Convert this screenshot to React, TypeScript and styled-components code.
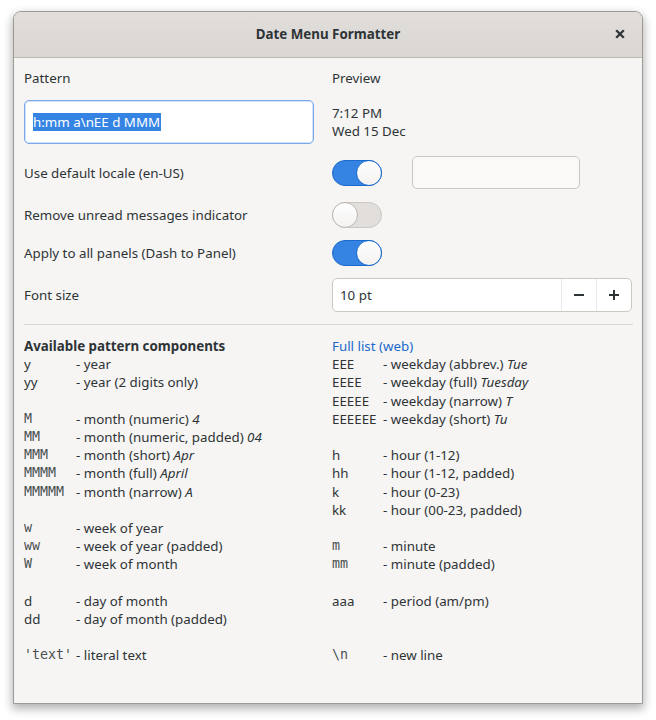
import React from "react";
import styled, { createGlobalStyle } from "styled-components";

const Global = createGlobalStyle`
  html, body { margin: 0; padding: 0; background: #ffffff; }
  body { font-family: "Noto Sans", "DejaVu Sans", sans-serif; font-size: 13.33px; color: #2e3436; }
  * { box-sizing: border-box; }
`;

const Page = styled.div`
  padding: 11px 0 16px 13px;
`;

const Window = styled.div`
  width: 630px;
  height: 693px;
  border: 1px solid #9c9a97;
  border-radius: 8px 8px 0 0;
  background: #f6f5f4;
  box-shadow: 0 4px 10px 1px rgba(0, 0, 0, 0.3);
  overflow: hidden;
  display: flex;
  flex-direction: column;
`;

const HeaderBar = styled.div`
  height: 46px;
  flex: none;
  background: linear-gradient(#e1dedb, #dad6d2);
  border-bottom: 1px solid #c0bab4;
  display: grid;
  grid-template-columns: 60px 1fr 60px;
  align-items: center;
`;

const Title = styled.div`
  grid-column: 2;
  text-align: center;
  font-weight: bold;
  font-size: 13.33px;
  line-height: 18px;
  margin-top: -2px;
  color: #2e3436;
`;

const CloseButton = styled.div`
  grid-column: 3;
  display: flex;
  align-items: center;
  justify-content: flex-end;
  padding-right: 17px;
  margin-top: -2px;
  height: 100%;
`;

const Content = styled.div`
  padding: 9px 9px 0 10px;
  display: flex;
  flex-direction: column;
`;

const Form = styled.div`
  display: grid;
  grid-template-columns: 290px 300px;
  column-gap: 18px;
  row-gap: 12px;
  grid-template-rows: 21px 44px 34px 26px 26px 34px;
`;

const Cell = styled.div`
  display: flex;
  align-items: center;
  gap: 30px;
`;

const Label = styled.span`
  color: #2e3436;
`;

const Entry = styled.div<{ $focused?: boolean }>`
  width: 100%;
  height: 100%;
  background: #ffffff;
  border: 1px solid ${(p) => (p.$focused ? "#79a8e8" : "#cdc7c2")};
  box-shadow: ${(p) => (p.$focused ? "inset 0 0 0 1px rgba(53,132,228,0.22)" : "none")};
  border-radius: 5px;
  display: flex;
  align-items: center;
  padding-left: 8px;
`;

const Selected = styled.span`
  background: #3584e4;
  color: #ffffff;
  line-height: 18px;
  padding-right: 1px;
`;

const Preview = styled.div`
  line-height: 18px;
  display: flex;
  flex-direction: column;
  justify-content: center;
`;

const Track = styled.div<{ $on?: boolean }>`
  width: 50px;
  height: 26px;
  flex: none;
  border-radius: 13px;
  border: 1px solid ${(p) => (p.$on ? "#1b6acb" : "#cdc7c2")};
  background: ${(p) => (p.$on ? "#3584e4" : "#e1dedb")};
  display: flex;
  align-items: center;
  justify-content: ${(p) => (p.$on ? "flex-end" : "flex-start")};
`;

const Knob = styled.div<{ $on?: boolean }>`
  width: 26px;
  height: 26px;
  margin: -1px;
  border-radius: 50%;
  background: linear-gradient(#ffffff, #f3f2f1);
  border: 1px solid ${(p) => (p.$on ? "#1b6acb" : "#bfb8b1")};
`;

const LocaleEntry = styled.div`
  width: 168px;
  height: 33px;
  margin-top: -1px;
  background: #faf9f8;
  border: 1px solid #cdc7c2;
  border-radius: 5px;
`;

const Spin = styled.div`
  width: 100%;
  height: 100%;
  background: #ffffff;
  border: 1px solid #cdc7c2;
  border-radius: 5px;
  display: flex;
  align-items: stretch;
`;

const SpinText = styled.div`
  flex: 1;
  display: flex;
  align-items: center;
  padding-left: 7px;
`;

const SpinButton = styled.div`
  width: 35px;
  border-left: 1px solid #ebe9e7;
  display: flex;
  align-items: center;
  justify-content: center;
`;

const Separator = styled.div`
  height: 1px;
  background: #d9d5d1;
  margin: 12px 0 12px;
`;

const Legend = styled.div`
  display: grid;
  grid-template-columns: 290px 300px;
  column-gap: 18px;
  line-height: 18.2px;
`;

const Column = styled.div`
  display: flex;
  flex-direction: column;
`;

const Heading = styled.div`
  font-weight: bold;
  height: 18.2px;
`;

const Link = styled.span`
  color: #1b6acb;
  height: 18.2px;
`;

const Line = styled.div`
  display: flex;
  height: 18.2px;
  white-space: nowrap;
`;

const Code = styled.span<{ $mono?: boolean; $w: number }>`
  min-width: ${(p) => p.$w}px;
  font-family: ${(p) =>
    p.$mono ? '"DejaVu Sans Mono", "Liberation Mono", monospace' : '"Noto Sans", sans-serif'};
  font-size: 13.33px;
  color: ${(p) => (p.$mono ? "#4a5052" : "#2e3436")};
`;

const Ex = styled.i``;

type Item = { c?: string; mono?: boolean; d?: string; ex?: string };

const left: Item[] = [
  { c: "y", d: "- year" },
  { c: "yy", d: "- year (2 digits only)" },
  {},
  { c: "M", mono: true, d: "- month (numeric)", ex: "4" },
  { c: "MM", mono: true, d: "- month (numeric, padded)", ex: "04" },
  { c: "MMM", mono: true, d: "- month (short)", ex: "Apr" },
  { c: "MMMM", mono: true, d: "- month (full)", ex: "April" },
  { c: "MMMMM", mono: true, d: "- month (narrow)", ex: "A" },
  {},
  { c: "w", mono: true, d: "- week of year" },
  { c: "ww", mono: true, d: "- week of year (padded)" },
  { c: "W", mono: true, d: "- week of month" },
  {},
  { c: "d", d: "- day of month" },
  { c: "dd", d: "- day of month (padded)" },
  {},
  { c: "'text'", mono: true, d: "- literal text" },
];

const right: Item[] = [
  { c: "EEE", d: "- weekday (abbrev.)", ex: "Tue" },
  { c: "EEEE", d: "- weekday (full)", ex: "Tuesday" },
  { c: "EEEEE", d: "- weekday (narrow)", ex: "T" },
  { c: "EEEEEE", d: "- weekday (short)", ex: "Tu" },
  {},
  { c: "h", d: "- hour (1-12)" },
  { c: "hh", d: "- hour (1-12, padded)" },
  { c: "k", d: "- hour (0-23)" },
  { c: "kk", d: "- hour (00-23, padded)" },
  {},
  { c: "m", mono: true, d: "- minute" },
  { c: "mm", mono: true, d: "- minute (padded)" },
  {},
  { c: "aaa", d: "- period (am/pm)" },
  {},
  {},
  { c: "\\n", mono: true, d: "- new line" },
];

const Lines = ({ items, w }: { items: Item[]; w: number }) => (
  <>
    {items.map((it, i) => (
      <Line key={i}>
        {it.c && (
          <>
            <Code $mono={it.mono} $w={w}>
              {it.c}
            </Code>
            <span>
              {it.d}
              {it.ex && (
                <>
                  {" "}
                  <Ex>{it.ex}</Ex>
                </>
              )}
            </span>
          </>
        )}
      </Line>
    ))}
  </>
);

const Switch = ({ on }: { on?: boolean }) => (
  <Track $on={on}>
    <Knob $on={on} />
  </Track>
);

export default function App() {
  return (
    <Page>
      <Global />
      <Window>
        <HeaderBar>
          <Title>Date Menu Formatter</Title>
          <CloseButton>
            <svg width="10" height="10" viewBox="0 0 10 10">
              <path d="M1.2 1.2 L8.8 8.8 M8.8 1.2 L1.2 8.8" stroke="#2e3436" strokeWidth="2.3" strokeLinecap="butt" />
            </svg>
          </CloseButton>
        </HeaderBar>
        <Content>
          <Form>
            <Cell>
              <Label>Pattern</Label>
            </Cell>
            <Cell>
              <Label>Preview</Label>
            </Cell>

            <Cell>
              <Entry $focused>
                <Selected>h:mm a\nEE d MMM</Selected>
              </Entry>
            </Cell>
            <Preview>
              <span>7:12 PM</span>
              <span>Wed 15 Dec</span>
            </Preview>

            <Cell>
              <Label>Use default locale (en-US)</Label>
            </Cell>
            <Cell>
              <Switch on />
              <LocaleEntry />
            </Cell>

            <Cell>
              <Label>Remove unread messages indicator</Label>
            </Cell>
            <Cell>
              <Switch />
            </Cell>

            <Cell>
              <Label>Apply to all panels (Dash to Panel)</Label>
            </Cell>
            <Cell>
              <Switch on />
            </Cell>

            <Cell>
              <Label>Font size</Label>
            </Cell>
            <Cell>
              <Spin>
                <SpinText>10 pt</SpinText>
                <SpinButton>
                  <svg width="14" height="14" viewBox="0 0 14 14">
                    <path d="M2 7 H12" stroke="#2e3436" strokeWidth="2" />
                  </svg>
                </SpinButton>
                <SpinButton>
                  <svg width="14" height="14" viewBox="0 0 14 14">
                    <path d="M2 7 H12 M7 2 V12" stroke="#2e3436" strokeWidth="2" />
                  </svg>
                </SpinButton>
              </Spin>
            </Cell>
          </Form>
          <Separator />
          <Legend>
            <Column>
              <Heading>Available pattern components</Heading>
              <Lines items={left} w={52} />
            </Column>
            <Column>
              <Link>Full list (web)</Link>
              <Lines items={right} w={51} />
            </Column>
          </Legend>
        </Content>
      </Window>
    </Page>
  );
}
